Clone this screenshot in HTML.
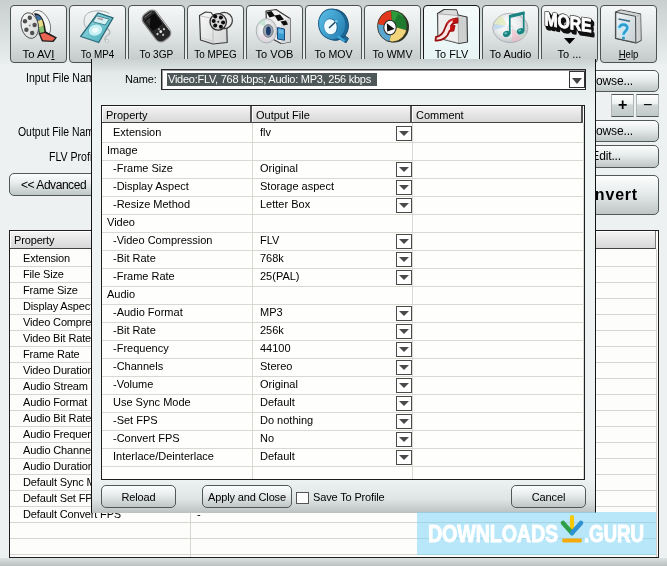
<!DOCTYPE html>
<html><head><meta charset="utf-8">
<style>
*{box-sizing:border-box;margin:0;padding:0}
html,body{width:667px;height:566px;overflow:hidden}
body{position:relative;background:#edf1f1;font-family:"Liberation Sans",sans-serif;font-size:11px;color:#000;letter-spacing:-0.15px}
.a{position:absolute}
.t{position:absolute;white-space:nowrap;line-height:13px}
/* toolbar */
#tb{position:absolute;left:0;top:0;width:667px;height:64px;background:linear-gradient(#c9cfcf,#dfe5e5 70%,#e9eeee)}
.tbtn{position:absolute;top:5px;width:57px;height:58px;border:1px solid #4a5252;border-radius:4px;background:linear-gradient(#f6f8f8,#e3e7e7 45%,#c4caca)}
.tbtn .lb{position:absolute;left:-5px;right:-5px;top:42px;text-align:center;font-size:11px;line-height:13px;white-space:nowrap;letter-spacing:0}

.tbtn.on{border-color:#1a1a1a;background:linear-gradient(#f6fbfb,#e6f4f4)}
/* generic buttons */
.btn{position:absolute;border:1px solid #505858;border-radius:5px;background:linear-gradient(#fdfefe,#e9eded 40%,#bfc6c6);text-align:center;white-space:nowrap}
/* main table */
#mt{position:absolute;left:9px;top:230px;width:650px;height:328px;border:1px solid #1e1e1e;background:#fdfdfc;overflow:hidden}
.mrow{position:absolute;left:0;width:647px;height:16px;border-bottom:1px solid #d6d6d0}
/* dialog */
#dlg{position:absolute;left:91px;top:59px;width:505px;height:454px;border:1px solid #141414;border-top:none;border-bottom:none;background:linear-gradient(#c9d0d0,#e3e9e9 14px,#eef3f3 50px,#eef2f2 420px,#dfe5e5 440px,#bcc2c2 454px)}
#dt{position:absolute;left:9px;top:46px;width:484px;height:375px;border:1px solid #1e1e1e;background:#fefefd;overflow:hidden;letter-spacing:0}
.hc{position:absolute;top:0;height:17px;background:linear-gradient(#f4f4f4,#d8d8d8);border-right:2px solid #555;border-bottom:1px solid #444;box-shadow:inset 1px 1px 0 #fff;padding-left:4px;line-height:18px}
.drow{position:absolute;left:0;width:482px;height:18px;border-bottom:1px solid #d9d9d3}
.dd{position:absolute;left:294px;width:16px;height:15px;border:1.4px solid #4a4a4a;background:#fff}
.dd:after{content:"";position:absolute;left:2px;top:4px;border-left:5px solid transparent;border-right:5px solid transparent;border-top:5px solid #4a4a4a}
</style></head><body><div id="root" style="position:absolute;left:0;top:0;width:667px;height:566px;overflow:hidden;will-change:transform">

<div id="tb"></div>
<div class="tbtn" style="left:10px"><div class="lb" style="transform:scaleX(1.03)">To AV<u>I</u></div></div>
<div class="tbtn" style="left:69px"><div class="lb" style="transform:scaleX(0.9)">To MP4</div></div>
<div class="tbtn" style="left:128px"><div class="lb" style="transform:scaleX(0.92)">To 3GP</div></div>
<div class="tbtn" style="left:187px"><div class="lb" style="transform:scaleX(0.9)">To MPEG</div></div>
<div class="tbtn" style="left:246px"><div class="lb" style="transform:scaleX(1.0)">To VOB</div></div>
<div class="tbtn" style="left:305px"><div class="lb" style="transform:scaleX(0.96)">To MOV</div></div>
<div class="tbtn" style="left:364px"><div class="lb" style="transform:scaleX(0.96)">To WMV</div></div>
<div class="tbtn on" style="left:423px"><div class="lb" style="transform:scaleX(0.99)">To FLV</div></div>
<div class="tbtn" style="left:482px"><div class="lb" style="transform:scaleX(0.99)">To Audio</div></div>
<div class="tbtn" style="left:541px"><div class="lb" style="transform:scaleX(1.0)">To ...</div></div>
<div class="tbtn" style="left:600px"><div class="lb" style="transform:scaleX(0.87)"><u>H</u>elp</div></div>

<svg class="a" style="left:0;top:0" width="667" height="64" viewBox="0 0 667 64">
<defs>
<linearGradient id="gReel" x1="0" y1="0" x2="1" y2="1"><stop offset="0" stop-color="#fdfdfd"/><stop offset="1" stop-color="#cfd2d2"/></linearGradient>
<linearGradient id="gTeal" x1="0" y1="0" x2="1" y2="1"><stop offset="0" stop-color="#a6e6ee"/><stop offset="1" stop-color="#3ea6b4"/></linearGradient>
<radialGradient id="gCD" cx="0.45" cy="0.45" r="0.6"><stop offset="0" stop-color="#ffffff"/><stop offset="0.6" stop-color="#e6e8ea"/><stop offset="1" stop-color="#c9cdd0"/></radialGradient>
<linearGradient id="gBox" x1="0" y1="0" x2="1" y2="1"><stop offset="0" stop-color="#fafafa"/><stop offset="1" stop-color="#d2d4d4"/></linearGradient>
<linearGradient id="gQ" x1="0" y1="0" x2="1" y2="1"><stop offset="0" stop-color="#5ec3ea"/><stop offset="1" stop-color="#1f78ad"/></linearGradient>
<radialGradient id="gCD2" cx="0.42" cy="0.4" r="0.65"><stop offset="0" stop-color="#ffffff"/><stop offset="0.55" stop-color="#e9ebed"/><stop offset="1" stop-color="#bcc0c4"/></radialGradient>
<linearGradient id="gBook" x1="0" y1="0" x2="1" y2="1"><stop offset="0" stop-color="#eef4f6"/><stop offset="1" stop-color="#c8d0d4"/></linearGradient>
</defs>
<!-- AVI reel -->
<g>
 <ellipse cx="41" cy="23.5" rx="8.5" ry="14" transform="rotate(-25 41 23.5)" fill="#f4f6f6" stroke="#6a6a6a" stroke-width="0.8"/>
 <path d="M34 13.5 C38 12.5 41 15 43 19.5 C45 24 45.5 28.5 46 31.5 L57 37.5 L53.5 42 L42 41.5 C40 38 38.5 33 38 28 C37.5 23 36.5 17.5 34 13.5Z" fill="#1e1e1e"/>
 <path d="M35.5 15 C38.5 14.5 40.5 16.5 41.8 19.5 L37.6 21Z" fill="#3f70a4"/>
 <path d="M37.6 21 L41.8 19.5 C42.8 22 43.3 24.5 43.6 26.5 L38.7 27.3Z" fill="#e6dc8c"/>
 <path d="M38.7 27.3 L43.6 26.5 C44 29 44.2 30.5 44.4 32 L39.8 33Z" fill="#84c274"/>
 <path d="M40.3 34 L44.6 33 L55 38 L52.5 40.8 L43 40.3 C41.8 38 41 36 40.3 34Z" fill="#ea6452"/>
 <ellipse cx="29.8" cy="25.6" rx="8.6" ry="13" transform="rotate(-12 29.8 25.6)" fill="url(#gReel)" stroke="#4a4a4a" stroke-width="0.9"/>
 <circle cx="29.8" cy="17.8" r="2.2" fill="#505050"/><circle cx="25" cy="21.2" r="2.2" fill="#505050"/><circle cx="26.4" cy="29.7" r="2.2" fill="#505050"/><circle cx="32.2" cy="33" r="2.2" fill="#505050"/><circle cx="34.6" cy="25" r="2.2" fill="#505050"/><circle cx="29.8" cy="25.5" r="1" fill="#888"/>
</g>
<!-- MP4 ipod -->
<g>
 <path d="M86 15 C89 10 103 9.5 109.5 13.5" fill="none" stroke="#a0a8a8" stroke-width="0.9"/>
 <path d="M86 15 C83 19 83.5 25 86.5 28" fill="none" stroke="#a0a8a8" stroke-width="0.9"/>
 <path d="M105 28 C110 29 111.5 33 108 35 C105 36.5 104 39 106 41" fill="none" stroke="#b0b8b8" stroke-width="1.3"/>
 <circle cx="107" cy="41" r="1.6" fill="#e8eeee" stroke="#a8b0b0" stroke-width="0.6"/>
 <path d="M98 12.8 L113 17.8 L98.7 42.5 L80.7 36.5 Z" fill="url(#gTeal)" stroke="#2a6a78" stroke-width="1.3" stroke-linejoin="round"/>
 <path d="M96.8 15.8 L109.3 19.2 L105.2 25 L92.8 21.8 Z" fill="#d4f2f4" stroke="#3a7884" stroke-width="0.9"/>
 <path d="M97.5 18.2 L103 19.6" stroke="#b89aa0" stroke-width="1.6"/>
 <ellipse cx="95.4" cy="30.1" rx="7.4" ry="6" transform="rotate(-20 95.4 30.1)" fill="#c6f0f4" stroke="#5cb4c0" stroke-width="0.9"/>
 <ellipse cx="95.4" cy="30.1" rx="3.2" ry="2.5" transform="rotate(-20 95.4 30.1)" fill="#f0fcfc"/>
</g>
<!-- 3GP phone -->
<g transform="rotate(-37 156.5 26)">
 <rect x="148" y="9.5" width="17" height="33" rx="6" fill="#262626" stroke="#8c8c8c" stroke-width="1.2"/>
 <rect x="150" y="14" width="13" height="14.5" rx="1.5" fill="#0c0c0c" stroke="#3a3a3a" stroke-width="0.6"/>
 <path d="M151 15.5 L157 15.5 L151 22Z" fill="#4a4a4a" opacity="0.7"/>
 <path d="M152 12 L161 12" stroke="#777" stroke-width="0.9"/>
 <circle cx="152.5" cy="33" r="1.1" fill="#cfcfcf"/><circle cx="156.5" cy="33" r="1.4" fill="#e6e6e6"/><circle cx="160.5" cy="33" r="1.1" fill="#cfcfcf"/><circle cx="156.5" cy="37" r="1.1" fill="#bdbdbd"/><circle cx="156.5" cy="30" r="1" fill="#b0b0b0"/>
 <path d="M164.5 14 L164.5 38" stroke="#c8c8c8" stroke-width="0.9"/>
</g>
<!-- MPEG folder + reel -->
<g>
 <path d="M199.5 15.5 L205.5 12 L211 12.5 L212.5 14.5 L226.5 17 L227.2 42.5 L213 44 L200.5 40 Z" fill="url(#gBox)" stroke="#3c3c3c" stroke-width="1.2" stroke-linejoin="round"/>
 <path d="M200.5 16 L213 18.5 L213 43.5" fill="none" stroke="#b4b4b4" stroke-width="0.8"/>
 <path d="M201 38 L212.5 41" stroke="#c8c8c8" stroke-width="0.8"/>
 <circle cx="224.2" cy="20.5" r="8.2" fill="#ececec" stroke="#3a3a3a" stroke-width="1.2"/>
 <circle cx="218.2" cy="21.9" r="8.2" fill="#d6d6d6" stroke="#2a2a2a" stroke-width="1.3"/>
 <circle cx="215.2" cy="16.4" r="2" fill="#0a0a0a"/><circle cx="220.9" cy="17.4" r="2" fill="#0a0a0a"/><circle cx="213.7" cy="20.9" r="2" fill="#0a0a0a"/><circle cx="223.1" cy="22.6" r="2" fill="#0a0a0a"/><circle cx="215.2" cy="25.6" r="2" fill="#0a0a0a"/><circle cx="220.9" cy="26.7" r="2" fill="#0a0a0a"/><circle cx="218.3" cy="21.8" r="1" fill="#222"/>
</g>
<!-- VOB -->
<g>
 <path d="M266 11 L276 9.5 L290 18.5 L290 42 L281 43.5 L267 36 Z" fill="#f0f0f0" stroke="#3a3a3a" stroke-width="1.2" stroke-linejoin="round"/>
 <path d="M281 21 L290 18.5 L290 42 L281 43.5Z" fill="#d8d8d8"/>
 <path d="M266.5 12 L271.5 11 L275 16 L269.5 17.5 Z M274.5 15.5 L280 14.5 L284 19.5 L278 21 Z M280.5 21.5 L286 20.5 L288 24.5 L283.5 25.5Z" fill="#0c0c0c"/>
 <path d="M277.5 27.5 L284.5 29 L284.5 40.2 L277.5 39Z" fill="#3a9ad0" stroke="#1a4a80" stroke-width="1"/>
 <path d="M278.5 29 L283.5 30 L283.5 34 L278.5 33Z" fill="#8ad0f0" opacity="0.6"/>
 <ellipse cx="266.5" cy="30.8" rx="10.3" ry="12.2" fill="url(#gCD)" stroke="#a0a6aa" stroke-width="0.8"/>
 <path d="M258 23 C260 20.5 262.5 19.2 265 19 L265.5 27Z" fill="#b0e0c8" opacity="0.6"/>
 <path d="M259 37 C261 40 264 42 267 42.3 L266.5 32Z" fill="#e8d0e0" opacity="0.5"/>
 <ellipse cx="268.2" cy="30.9" rx="5" ry="6.4" fill="#9aa4ae" stroke="#5a6068" stroke-width="0.7"/>
 <ellipse cx="268.4" cy="31" rx="2.4" ry="4.4" fill="#1c3c6c"/>
</g>
<!-- MOV quicktime -->
<g>
 <path d="M340.5 32 L348.5 38.5 L346 42.8 L337 37.5Z" fill="#1d6a98" stroke="#124a6a" stroke-width="0.9"/>
 <ellipse cx="334.5" cy="24.8" rx="13.8" ry="15.6" transform="rotate(-12 334.5 24.8)" fill="#1d6fa0" stroke="#124c70" stroke-width="1"/>
 <ellipse cx="332.2" cy="24.3" rx="13.6" ry="15.4" transform="rotate(-12 332.2 24.3)" fill="url(#gQ)" stroke="#1a5e88" stroke-width="1"/>
 <path d="M339 35.5 L345.5 40.5 L343.5 42 L336.5 37Z" fill="#3aa6d8"/>
 <ellipse cx="330.8" cy="26.6" rx="7" ry="8.2" transform="rotate(-12 330.8 26.6)" fill="#1f6a96"/>
 <ellipse cx="330.4" cy="26.8" rx="6.3" ry="7.6" transform="rotate(-12 330.4 26.8)" fill="#eefbff"/>
 <path d="M329.5 27.5 L336 21.5" stroke="#23506e" stroke-width="1.7" stroke-linecap="round"/>
 <circle cx="336.2" cy="21.2" r="1.2" fill="#7fd0f0"/>
</g>
<!-- WMV -->
<g>
 <ellipse cx="394" cy="26.8" rx="15" ry="15.8" fill="#27301f" />
 <clipPath id="cW"><ellipse cx="392.3" cy="26.2" rx="14.8" ry="15.8"/></clipPath>
 <g clip-path="url(#cW)">
  <path d="M392.3 26.2 L391 8 L376 8 L376 24Z" fill="#e2381c"/>
  <path d="M392.3 26.2 L391 8 L409 8 L409 31Z" fill="#2e9a3c"/>
  <path d="M398 14 L409 20 L409 31 L392.3 26.2Z" fill="#1e7a2e"/>
  <path d="M392.3 26.2 L409 31 L409 44 L389 44Z" fill="#f2d47a"/>
  <path d="M392.3 26.2 L389 44 L376 44 L376 24Z" fill="#5aa6ce"/>
 </g>
 <ellipse cx="392.3" cy="26.2" rx="14.8" ry="15.8" fill="none" stroke="#3a3a2a" stroke-width="0.9"/>
 <ellipse cx="390" cy="27.5" rx="6.2" ry="7.2" fill="#fafafa" stroke="#2a2a2a" stroke-width="1.1"/>
 <path d="M386.8 23.2 L394.6 29 L387.2 31.6Z" fill="#111"/>
</g>
<!-- FLV -->
<g>
 <path d="M437.5 13.5 L444 9.5 L456.5 9.8 L458 15 L467 17 L467.5 42 L459 43.5 L438 38 Z" fill="#d2d4d4" stroke="#3c3c3c" stroke-width="1.2" stroke-linejoin="round"/>
 <path d="M438 13.8 L458 15.5 L458.5 43 L438.3 37.8Z" fill="#eeeeee" stroke="#8a8a8a" stroke-width="0.6"/>
 <path d="M444 10 L456.5 10.5 L457.5 14.8 L443.5 13.5Z" fill="#dcdcdc"/>
 <path d="M460 20 L460 41 M462.5 20.5 L462.5 41 M465 21 L465 41" stroke="#c4c6c6" stroke-width="0.7"/>
 <path d="M457.5 18.5 C450 18.5 446.5 22.5 445 28 C443.5 33 441.5 36 436 37 L435.5 40.5 C443.5 41 447.5 37 449.5 31 L453.5 30.5 L454.5 26 L451 26 C452.5 23 454.5 22.5 457.5 22.5Z" fill="#fbe4e4" stroke="#9a1010" stroke-width="1.8" stroke-linejoin="round"/>
 <path d="M450.5 25.5 L454.5 25.5 L453.5 30.8 L449.5 31Z M453 19 C455.5 18.7 457.5 19 457.5 22.5 L452.5 23Z" fill="#c41010"/>
 <path d="M447 24 C449 20.5 452 19.3 455 19" stroke="#d83030" stroke-width="1.2" fill="none"/>
</g>
<!-- Audio -->
<g>
 <ellipse cx="510.3" cy="27.9" rx="17.6" ry="14.6" fill="url(#gCD2)" stroke="#a9adb2" stroke-width="0.9"/>
 <path d="M494 25 C495 20 498 17 502 15.5 L507 25Z" fill="#d8e8a0" opacity="0.55"/>
 <path d="M494.5 30 C494 27 494 25.5 494.3 24 L507 26Z" fill="#9cc8f0" opacity="0.5"/>
 <path d="M512 41.5 C517 41.5 522 39.5 525 36.5 L512 29Z" fill="#f4b8c8" opacity="0.6"/>
 <path d="M521 39 C524 37 526 35 527 33 L513 29Z" fill="#b8e8d0" opacity="0.5"/>
 <ellipse cx="510.3" cy="27.9" rx="3" ry="2.4" fill="#f6f6f6" stroke="#c4c8cc" stroke-width="0.6"/>
 <path d="M509 15 L524.5 11.2 L524.5 14.6 L509 18.2Z" fill="#1a8482"/>
 <path d="M509.8 15.5 L509.8 34" stroke="#1a8482" stroke-width="1.7"/>
 <path d="M523.7 12 L523.7 31.2" stroke="#1a8482" stroke-width="1.7"/>
 <ellipse cx="506.6" cy="33.9" rx="3.7" ry="3" transform="rotate(-20 506.6 33.9)" fill="#1a8482"/>
 <ellipse cx="520.5" cy="31.2" rx="3.7" ry="3" transform="rotate(-20 520.5 31.2)" fill="#1a8482"/>
 <ellipse cx="505.8" cy="33.2" rx="1.6" ry="0.9" transform="rotate(-20 505.8 33.2)" fill="#6cc8c4"/>
 <ellipse cx="519.7" cy="30.5" rx="1.6" ry="0.9" transform="rotate(-20 519.7 30.5)" fill="#6cc8c4"/>
</g>
<!-- MORE -->
<g transform="translate(544.5 25) skewY(9)">
 <text x="2.2" y="3.2" font-family="Liberation Sans" font-weight="bold" font-size="19" textLength="47" lengthAdjust="spacingAndGlyphs" fill="#111" stroke="#111" stroke-width="3.4" stroke-linejoin="round">MORE</text><text x="1.2" y="1.8" font-family="Liberation Sans" font-weight="bold" font-size="19" textLength="47" lengthAdjust="spacingAndGlyphs" fill="#111" stroke="#111" stroke-width="3" stroke-linejoin="round">MORE</text>
 <text x="0" y="0" font-family="Liberation Sans" font-weight="bold" font-size="19" textLength="47" lengthAdjust="spacingAndGlyphs" fill="#111" stroke="#111" stroke-width="2.4" stroke-linejoin="round">MORE</text>
 <text x="0" y="0" font-family="Liberation Sans" font-weight="bold" font-size="19" textLength="47" lengthAdjust="spacingAndGlyphs" fill="#fff" stroke="#fff" stroke-width="0.9">MORE</text>
</g>
<path d="M564 38 L575.2 38 L569.6 44Z" fill="#000"/>
<!-- Help -->
<g>
 <path d="M615.5 12 L621 10 L640.5 14 L641 40.5 L636 43 L615.5 38.5Z" fill="#b4b8b8" stroke="#3a3a3a" stroke-width="1.2" stroke-linejoin="round"/>
 <path d="M621 10.3 L640.3 14.2 L635.5 16.3 L616.5 12.3Z" fill="#d0d4d4"/>
 <path d="M635.5 16.3 L640.6 14.2 L640.8 40.3 L635.8 42.7Z" fill="#c4c8c8"/>
 <path d="M637.5 17 L637.5 41 M639 16 L639 40.5" stroke="#e4e6e6" stroke-width="0.6"/>
 <path d="M615.8 12.3 L635.5 16.3 L635.8 42.7 L615.8 38.3Z" fill="url(#gBook)" stroke="#4a4e4e" stroke-width="1"/>
 <path d="M618.5 19 L630 21.3" stroke="#3a6a88" stroke-width="1.4"/>
 <path d="M619.5 27.8 C619.3 23.8 627.3 23.3 627.3 27.8 C627.3 31.3 623.5 31.3 623.5 34.8" fill="none" stroke="#b4eaff" stroke-width="4.6" stroke-linecap="round"/>
 <path d="M619.5 27.8 C619.3 23.8 627.3 23.3 627.3 27.8 C627.3 31.3 623.5 31.3 623.5 34.8" fill="none" stroke="#2f9ccc" stroke-width="2.6"/>
 <circle cx="623.5" cy="38" r="1.6" fill="#2f9ccc"/>
</g>
</svg>

<!-- main labels -->
<div class="t" style="left:26px;top:72px;font-size:12px;letter-spacing:0;transform:scaleX(0.88);transform-origin:0 0">Input File Name</div>
<div class="t" style="left:18px;top:126px;font-size:12px;letter-spacing:0;transform:scaleX(0.87);transform-origin:0 0">Output File Name</div>
<div class="t" style="left:49px;top:151px;font-size:12px;letter-spacing:0;transform:scaleX(0.88);transform-origin:0 0">FLV Profile</div>

<div class="btn" style="left:540px;top:70px;width:119px;height:22px;line-height:20px;font-size:12px;text-align:right;padding-right:25px">Browse...</div>
<div class="btn" style="left:611px;top:94px;width:23px;height:23px;line-height:22px;font-size:16px;font-weight:bold;line-height:20px;border-radius:1px;border-color:#4e5656 #b0b6b6;background:linear-gradient(#ffffff,#f0f3f3 40%,#d0d6d6 48%,#c2c9c9)">+</div>
<div class="btn" style="left:636px;top:94px;width:23px;height:23px;font-size:16px;line-height:20px;border-radius:1px;border-color:#4e5656 #b0b6b6;background:linear-gradient(#ffffff,#f0f3f3 40%,#d0d6d6 48%,#c2c9c9)">&minus;</div>
<div class="btn" style="left:540px;top:120px;width:119px;height:22px;line-height:20px;font-size:12px;text-align:right;padding-right:25px">Browse...</div>
<div class="btn" style="left:540px;top:145px;width:119px;height:23px;line-height:21px;font-size:12px;text-align:right;padding-right:37px">Edit...</div>
<div class="btn" style="left:9px;top:173px;width:100px;height:23px;line-height:22px;font-size:12px;text-align:left;padding-left:11px;letter-spacing:-0.45px">&lt;&lt; Advanced</div>
<div class="btn" style="left:540px;top:175px;width:119px;height:40px;line-height:38px;font-size:16px;font-weight:bold;text-align:right;padding-right:20px;letter-spacing:0.8px">Convert</div>

<div id="bstrip" class="a" style="left:0;top:558px;width:667px;height:8px;background:linear-gradient(#dde3e3,#b8bfbf)"></div>
<div id="mt">
<div class="hc" style="left:0;width:180px;height:18px;line-height:19px">Property</div><div class="hc" style="left:180px;width:466px;height:18px;border-right:1px solid #777"></div>
<div class="mrow" style="top:20px"></div>
<div class="t" style="left:13px;top:21px">Extension</div>
<div class="mrow" style="top:36px"></div>
<div class="t" style="left:13px;top:37px">File Size</div>
<div class="mrow" style="top:52px"></div>
<div class="t" style="left:13px;top:53px">Frame Size</div>
<div class="mrow" style="top:68px"></div>
<div class="t" style="left:13px;top:69px">Display Aspect</div>
<div class="mrow" style="top:84px"></div>
<div class="t" style="left:13px;top:85px">Video Compression</div>
<div class="mrow" style="top:100px"></div>
<div class="t" style="left:13px;top:101px">Video Bit Rate</div>
<div class="mrow" style="top:116px"></div>
<div class="t" style="left:13px;top:117px">Frame Rate</div>
<div class="mrow" style="top:132px"></div>
<div class="t" style="left:13px;top:133px">Video Duration</div>
<div class="mrow" style="top:148px"></div>
<div class="t" style="left:13px;top:149px">Audio Stream</div>
<div class="mrow" style="top:164px"></div>
<div class="t" style="left:13px;top:165px">Audio Format</div>
<div class="mrow" style="top:180px"></div>
<div class="t" style="left:13px;top:181px">Audio Bit Rate</div>
<div class="mrow" style="top:196px"></div>
<div class="t" style="left:13px;top:197px">Audio Frequency</div>
<div class="mrow" style="top:212px"></div>
<div class="t" style="left:13px;top:213px">Audio Channels</div>
<div class="mrow" style="top:228px"></div>
<div class="t" style="left:13px;top:229px">Audio Duration</div>
<div class="mrow" style="top:244px"></div>
<div class="t" style="left:13px;top:245px">Default Sync Mode</div>
<div class="mrow" style="top:260px"></div>
<div class="t" style="left:13px;top:261px">Default Set FPS</div>
<div class="mrow" style="top:276px"></div>
<div class="t" style="left:13px;top:277px">Default Convert FPS</div>
<div class="mrow" style="top:292px"></div>
<div class="mrow" style="top:308px"></div>
<div class="a" style="left:180px;top:18px;width:1px;height:320px;background:#d6d6d0"></div>
<div class="t" style="left:187px;top:277px">-</div>
<div class="a" style="left:646px;top:18px;width:1px;height:320px;background:#d0d0cc"></div>
</div>

<div id="dlg">
  <div class="t" style="left:33px;top:14px">Name:</div>
  <div class="a" style="left:69px;top:10px;width:425px;height:21px;border:1px solid #262626;box-shadow:inset 1px 1px 0 #9a9a9a;background:#fff">
    <div class="a" style="left:5px;top:3px;width:210px;height:13px;background:#4e5858"></div>
    <div class="t" style="left:6px;top:3px;color:#fff;letter-spacing:-0.25px">Video:FLV, 768 kbps; Audio: MP3, 256 kbps</div>
    <div class="a" style="left:407px;top:1px;width:16px;height:17px;border:1.3px solid #333;background:#fff"><div class="a" style="left:1.7px;top:5.5px;border-left:5px solid transparent;border-right:5px solid transparent;border-top:6px solid #444"></div></div>
  </div>
  <div id="dt">
<div class="hc" style="left:0;width:150px">Property</div><div class="hc" style="left:150px;width:160px">Output File</div><div class="hc" style="left:310px;width:171px">Comment</div>
<div class="drow" style="top:19px"></div>
<div class="t" style="left:11px;top:20px">Extension</div>
<div class="t" style="left:158px;top:20px">flv</div>
<div class="dd" style="top:20px"></div>
<div class="drow" style="top:37px"></div>
<div class="t" style="left:5px;top:38px">Image</div>
<div class="drow" style="top:55px"></div>
<div class="t" style="left:11px;top:56px">-Frame Size</div>
<div class="t" style="left:158px;top:56px">Original</div>
<div class="dd" style="top:56px"></div>
<div class="drow" style="top:73px"></div>
<div class="t" style="left:11px;top:74px">-Display Aspect</div>
<div class="t" style="left:158px;top:74px">Storage aspect</div>
<div class="dd" style="top:74px"></div>
<div class="drow" style="top:91px"></div>
<div class="t" style="left:11px;top:92px">-Resize Method</div>
<div class="t" style="left:158px;top:92px">Letter Box</div>
<div class="dd" style="top:92px"></div>
<div class="drow" style="top:109px"></div>
<div class="t" style="left:5px;top:110px">Video</div>
<div class="drow" style="top:127px"></div>
<div class="t" style="left:11px;top:128px">-Video Compression</div>
<div class="t" style="left:158px;top:128px">FLV</div>
<div class="dd" style="top:128px"></div>
<div class="drow" style="top:145px"></div>
<div class="t" style="left:11px;top:146px">-Bit Rate</div>
<div class="t" style="left:158px;top:146px">768k</div>
<div class="dd" style="top:146px"></div>
<div class="drow" style="top:163px"></div>
<div class="t" style="left:11px;top:164px">-Frame Rate</div>
<div class="t" style="left:158px;top:164px">25(PAL)</div>
<div class="dd" style="top:164px"></div>
<div class="drow" style="top:181px"></div>
<div class="t" style="left:5px;top:182px">Audio</div>
<div class="drow" style="top:199px"></div>
<div class="t" style="left:11px;top:200px">-Audio Format</div>
<div class="t" style="left:158px;top:200px">MP3</div>
<div class="dd" style="top:200px"></div>
<div class="drow" style="top:217px"></div>
<div class="t" style="left:11px;top:218px">-Bit Rate</div>
<div class="t" style="left:158px;top:218px">256k</div>
<div class="dd" style="top:218px"></div>
<div class="drow" style="top:235px"></div>
<div class="t" style="left:11px;top:236px">-Frequency</div>
<div class="t" style="left:158px;top:236px">44100</div>
<div class="dd" style="top:236px"></div>
<div class="drow" style="top:253px"></div>
<div class="t" style="left:11px;top:254px">-Channels</div>
<div class="t" style="left:158px;top:254px">Stereo</div>
<div class="dd" style="top:254px"></div>
<div class="drow" style="top:271px"></div>
<div class="t" style="left:11px;top:272px">-Volume</div>
<div class="t" style="left:158px;top:272px">Original</div>
<div class="dd" style="top:272px"></div>
<div class="drow" style="top:289px"></div>
<div class="t" style="left:11px;top:290px">Use Sync Mode</div>
<div class="t" style="left:158px;top:290px">Default</div>
<div class="dd" style="top:290px"></div>
<div class="drow" style="top:307px"></div>
<div class="t" style="left:11px;top:308px">-Set FPS</div>
<div class="t" style="left:158px;top:308px">Do nothing</div>
<div class="dd" style="top:308px"></div>
<div class="drow" style="top:325px"></div>
<div class="t" style="left:11px;top:326px">-Convert FPS</div>
<div class="t" style="left:158px;top:326px">No</div>
<div class="dd" style="top:326px"></div>
<div class="drow" style="top:343px"></div>
<div class="t" style="left:11px;top:344px">Interlace/Deinterlace</div>
<div class="t" style="left:158px;top:344px">Default</div>
<div class="dd" style="top:344px"></div>
<div class="drow" style="top:361px"></div>
<div class="a" style="left:150px;top:17px;width:1px;height:360px;background:#d9d9d3"></div>
<div class="a" style="left:481px;top:17px;width:1px;height:360px;background:#d9d9d3"></div>
<div class="a" style="left:310px;top:17px;width:1px;height:360px;background:#d9d9d3"></div>
</div>
  <div class="btn" style="left:9px;top:426px;width:75px;height:23px;line-height:22px">Reload</div>
  <div class="btn" style="left:110px;top:426px;width:90px;height:23px;line-height:22px">Apply and Close</div>
  <div class="a" style="left:204px;top:433px;width:13px;height:12px;border:1px solid #555;background:#fff"></div>
  <div class="t" style="left:221px;top:432px">Save To Profile</div>
  <div class="btn" style="left:419px;top:426px;width:75px;height:23px;line-height:22px">Cancel</div>
</div>

<!--WM-->
<div class="a" style="left:417px;top:512px;width:239px;height:43px;background:rgba(120,210,248,0.52)"></div>
<div class="a" style="left:428px;top:523px;width:131px;height:22px;overflow:visible"><svg width="240" height="24" style="position:absolute;left:0;top:0;overflow:visible"><text x="0" y="19" font-family="Liberation Sans" font-weight="bold" font-size="24" textLength="130" lengthAdjust="spacingAndGlyphs" fill="#fff" stroke="#fff" stroke-width="0.9">DOWNLOADS</text><text x="156" y="19" font-family="Liberation Sans" font-weight="bold" font-size="24" textLength="60" lengthAdjust="spacingAndGlyphs" fill="#fff" stroke="#fff" stroke-width="0.9">.GURU</text>
<path d="M144 -6 L144 6" stroke="#f5c80a" stroke-width="4.2" stroke-linecap="round"/><path d="M135 0 L144 10" stroke="#2fa048" stroke-width="4.6" stroke-linecap="round"/><path d="M144 10 L153 0" stroke="#2f92d2" stroke-width="4.6" stroke-linecap="round"/><rect x="134" y="15.5" width="20" height="4" rx="2" fill="#f5aa0a"/></svg></div>
</div></body></html>
